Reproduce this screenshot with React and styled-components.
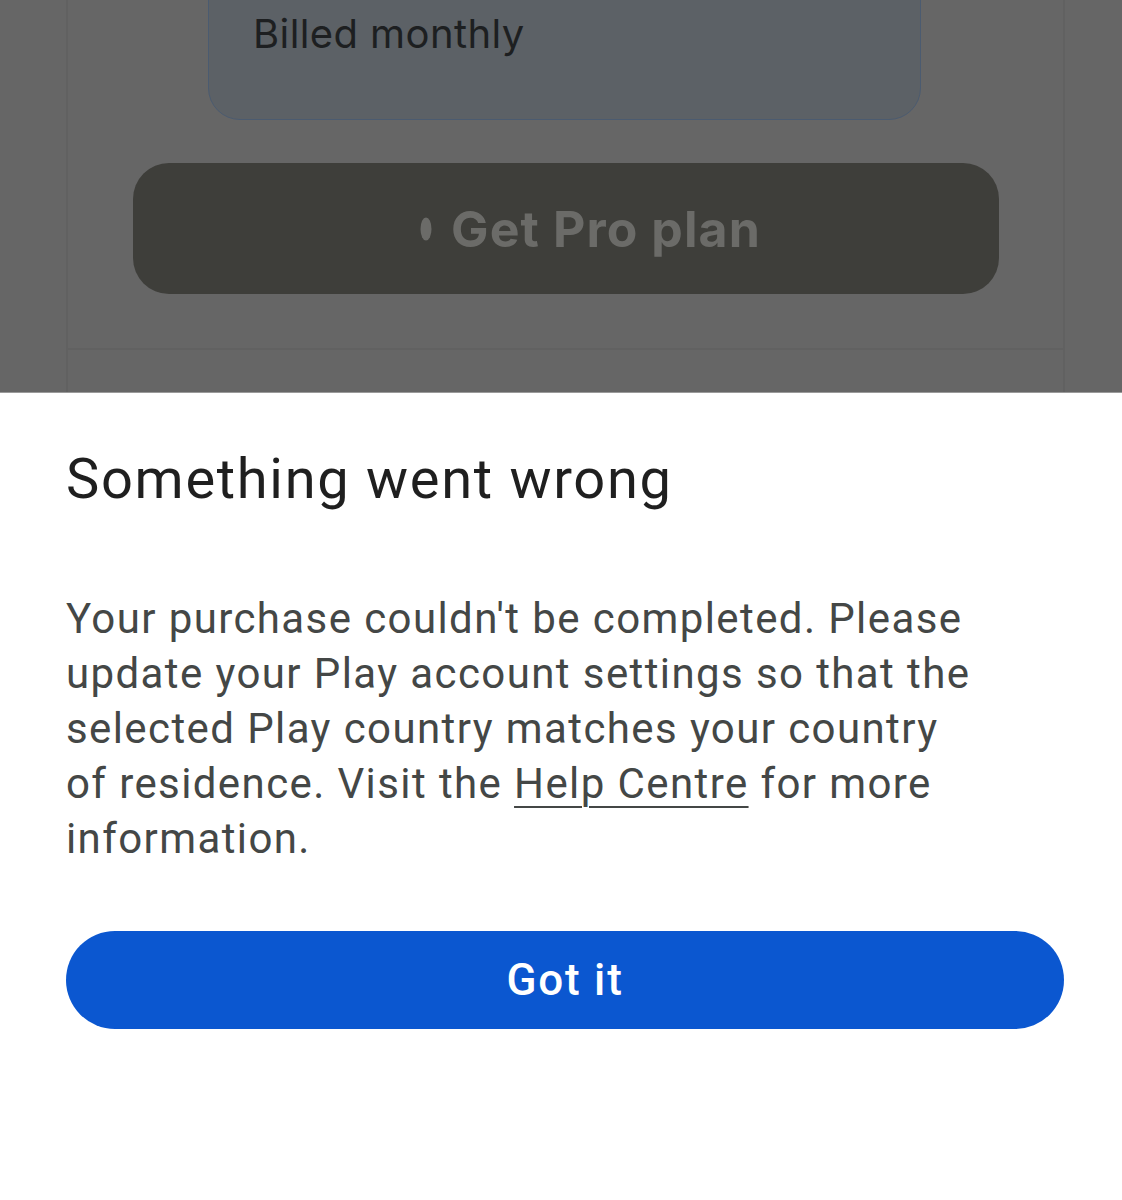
import React from "react";
import styled, { createGlobalStyle } from "styled-components";

const GlobalStyle = createGlobalStyle`
  html, body {
    margin: 0;
    padding: 0;
    background: #ffffff;
  }
  body {
    font-family: Roboto, "Noto Sans", Arial, sans-serif;
    -webkit-font-smoothing: antialiased;
  }
`;

const Page = styled.div`
  width: 1122px;
  height: 1200px;
  display: flex;
  flex-direction: column;
  overflow: hidden;
`;

const Backdrop = styled.div`
  height: 393px;
  flex-shrink: 0;
  background: #666666;
  overflow: hidden;
  border-bottom: 1px solid #9a9a9a;
  box-sizing: border-box;
`;

const Card = styled.div`
  margin: 0 57px 0 66px;
  height: 100%;
  border-left: 2px solid #616161;
  border-right: 2px solid #616161;
  display: flex;
  flex-direction: column;
`;

const CardBody = styled.div`
  display: flex;
  flex-direction: column;
  align-items: center;
  padding-bottom: 54px;
  border-bottom: 2px solid #616161;
`;

const PlanOption = styled.div`
  margin-top: -60px;
  margin-left: -2px;
  width: 713px;
  height: 180px;
  box-sizing: border-box;
  background: #5c6166;
  border: 1.5px solid #4b5b70;
  border-radius: 32px;
  padding: 73px 0 0 44px;
  font-family: Inter, Roboto, sans-serif;
  font-size: 40px;
  letter-spacing: 0.4px;
  line-height: 1;
  color: #1d1f21;
`;

const ProButton = styled.div`
  margin-top: 43px;
  width: 866px;
  height: 131px;
  border-radius: 36px;
  background: #3e3e3a;
  display: flex;
  align-items: center;
  justify-content: center;
  gap: 19px;
  font-family: Inter, Roboto, sans-serif;
  font-weight: 700;
  font-size: 50px;
  letter-spacing: 1.1px;
  color: #6b6b68;
  padding-left: 50px;
  box-sizing: border-box;
`;

const Sheet = styled.div`
  flex: 1;
  background: #ffffff;
  padding: 50px 58px 0 66px;
  display: flex;
  flex-direction: column;
`;

const Title = styled.h1`
  margin: 0;
  font-weight: 400;
  font-size: 56px;
  line-height: 72px;
  color: #1f1f1f;
  letter-spacing: 1.7px;
`;

const Message = styled.p`
  margin: 76px 0 0;
  font-size: 42px;
  line-height: 55px;
  color: #444746;
  letter-spacing: 1.4px;
`;

const HelpLink = styled.a`
  color: inherit;
  text-decoration: underline;
  text-decoration-thickness: 2px;
  text-underline-offset: 8px;
`;

const GotItButton = styled.button`
  margin-top: 65px;
  height: 98px;
  width: 100%;
  border: none;
  border-radius: 49px;
  background: #0b57d0;
  color: #ffffff;
  font-family: Roboto, "Noto Sans", Arial, sans-serif;
  font-weight: 500;
  font-size: 44px;
  letter-spacing: 1.8px;
  cursor: pointer;
`;

const Spinner = () => (
  <svg width="12" height="24" viewBox="0 0 12 24">
    <ellipse cx="6" cy="12" rx="5.5" ry="11.5" fill="#6b6b68" />
  </svg>
);

export default function App() {
  return (
    <>
      <GlobalStyle />
      <Page>
        <Backdrop>
          <Card>
            <CardBody>
              <PlanOption>Billed monthly</PlanOption>
              <ProButton>
                <Spinner />
                <span>Get Pro plan</span>
              </ProButton>
            </CardBody>
          </Card>
        </Backdrop>
        <Sheet>
          <Title>Something went wrong</Title>
          <Message>
            Your purchase couldn't be completed. Please
            <br />
            update your Play account settings so that the
            <br />
            selected Play country matches your country
            <br />
            of residence. Visit the <HelpLink href="#">Help Centre</HelpLink> for more
            <br />
            information.
          </Message>
          <GotItButton>Got it</GotItButton>
        </Sheet>
      </Page>
    </>
  );
}
